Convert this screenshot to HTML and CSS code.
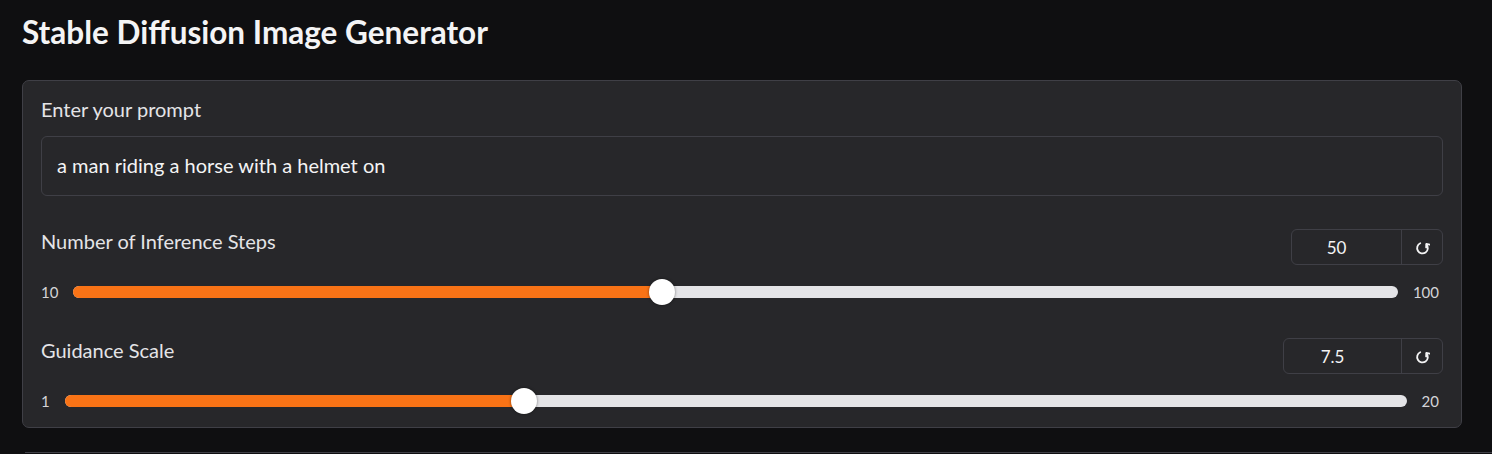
FILE: index.html
```html
<!DOCTYPE html>
<html>
<head>
<meta charset="utf-8">
<link rel="stylesheet" href="styles.css">
</head>
<body>
<div class="page">
  <h1 class="title">Stable Diffusion Image Generator</h1>
  <div class="panel">
    <div class="block prompt-block">
      <label class="label">Enter your prompt</label>
      <div class="textbox">a man riding a horse with a helmet on</div>
    </div>
    <div class="block slider-block">
      <div class="slider-head">
        <span class="label">Number of Inference Steps</span>
        <div class="numbox">
          <span class="num num-steps">50</span>
          <span class="reset"><svg class="reset-icon" viewBox="0 0 14 14"><path d="M4.9 3.0 A5 5 0 1 0 10.8 4.3" /><path d="M10.4 7.0 L10.6 3.6 L13.6 4.3" /></svg></span>
        </div>
      </div>
      <div class="slider-row">
        <span class="minmax">10</span>
        <div class="track"><div class="fill" style="width:44.44%"></div><div class="thumb" style="left:44.44%"></div></div>
        <span class="minmax">100</span>
      </div>
    </div>
    <div class="block slider-block">
      <div class="slider-head">
        <span class="label">Guidance Scale</span>
        <div class="numbox">
          <span class="num num-scale">7.5</span>
          <span class="reset"><svg class="reset-icon" viewBox="0 0 14 14"><path d="M4.9 3.0 A5 5 0 1 0 10.8 4.3" /><path d="M10.4 7.0 L10.6 3.6 L13.6 4.3" /></svg></span>
        </div>
      </div>
      <div class="slider-row">
        <span class="minmax">1</span>
        <div class="track"><div class="fill" style="width:34.21%"></div><div class="thumb" style="left:34.21%"></div></div>
        <span class="minmax">20</span>
      </div>
    </div>
  </div>
  <div class="next-block"></div>
</div>
</body>
</html>
```
FILE: styles.css
```css
* { box-sizing: border-box; }
html, body { margin: 0; padding: 0; }
body {
  background: #0f0f11;
  font-family: "Lato", "Liberation Sans", sans-serif;
  color: #e4e4e7;
  width: 1492px;
  height: 454px;
  overflow: hidden;
}
.page {
  padding: 12px 0 0 22px;
}
.title {
  margin: 0 0 28px 0;
  font-size: 31.5px;
  line-height: 40px;
  font-weight: 700;
  color: #f4f4f5;
}
.panel {
  width: 1440px;
  height: 348px;
  background: #27272a;
  border: 1px solid #3f3f46;
  border-radius: 7px;
  padding: 16px 18px 0 18px;
  display: flex;
  flex-direction: column;
}
.label {
  font-size: 20px;
  line-height: 24px;
  color: #e4e4e7;
}
.prompt-block {
  display: flex;
  flex-direction: column;
  gap: 15px;
}
.textbox {
  height: 60px;
  border: 1px solid #3f3f46;
  border-radius: 6px;
  padding: 0 15px 2px 15px;
  display: flex;
  align-items: center;
  font-size: 20px;
  color: #f4f4f5;
}
.slider-block {
  margin-top: 33px;
}
.slider-block + .slider-block {
  margin-top: 32px;
}
.slider-head {
  display: flex;
  justify-content: space-between;
  align-items: flex-start;
  height: 36px;
}
.numbox {
  display: flex;
  height: 36px;
  border: 1px solid #3f3f46;
  border-radius: 6px;
}
.num {
  display: flex;
  align-items: center;
  justify-content: center;
  padding-right: 20px;
  font-size: 17px;
  color: #f4f4f5;
  border-right: 1px solid #3f3f46;
}
.num-steps { width: 110px; }
.num-scale { width: 118px; }
.reset {
  width: 40px;
  display: flex;
  align-items: center;
  justify-content: center;
}
.reset-icon {
  width: 15px;
  height: 15px;
  fill: none;
  stroke: #f4f4f5;
  stroke-width: 1.7;
  stroke-linecap: round;
  stroke-linejoin: round;
}
.slider-row {
  display: flex;
  align-items: center;
  gap: 15px;
  height: 28px;
  margin-top: 13px;
  padding-right: 4px;
}
.minmax {
  font-size: 15px;
  color: #d4d4d8;
}
.track {
  flex: 1;
  position: relative;
  height: 12px;
  border-radius: 6px;
  background: #e4e4e7;
}
.fill {
  height: 100%;
  background: #f97316;
  border-radius: 6px 0 0 6px;
}
.thumb {
  position: absolute;
  top: 50%;
  width: 26px;
  height: 26px;
  margin: -13px 0 0 -13px;
  border-radius: 50%;
  background: #ffffff;
  box-shadow: 0 0 3px rgba(0,0,0,0.5);
}
.next-block {
  margin: 24px 0 0 3px;
  height: 10px;
  border-top: 1px solid #3f3f46;
}
```
